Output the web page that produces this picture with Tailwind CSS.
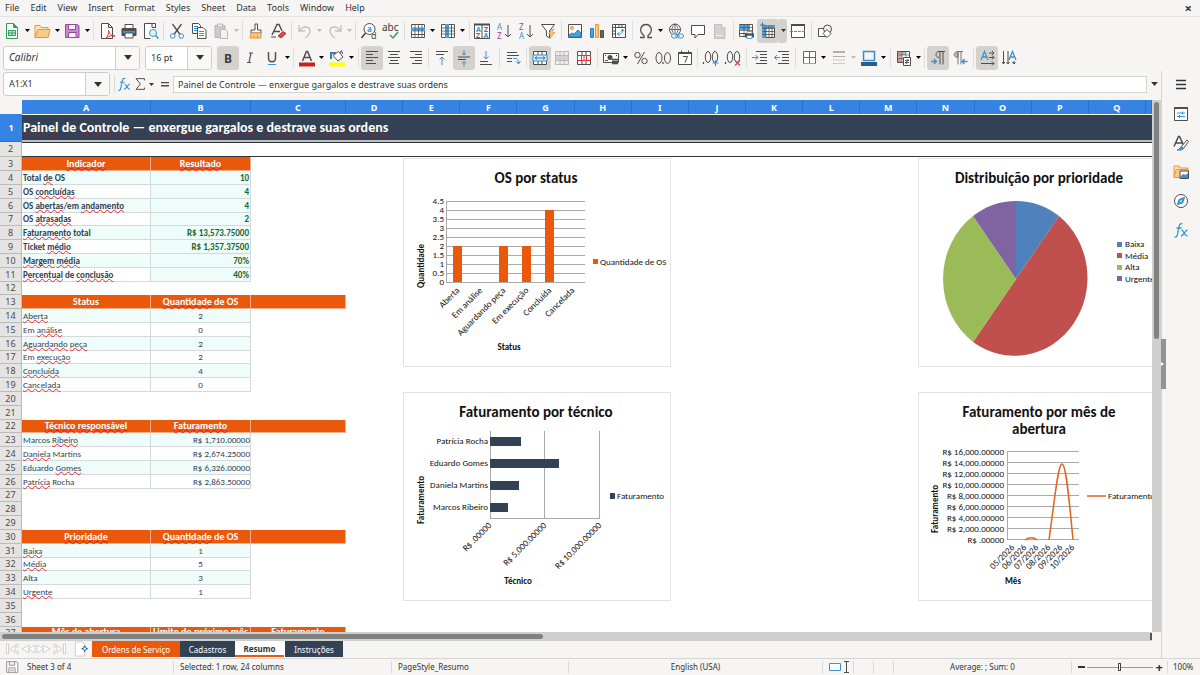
<!DOCTYPE html>
<html lang="en">
<head>
<meta charset="utf-8">
<title>Resumo — Spreadsheet</title>
<script src="https://cdn.jsdelivr.net/npm/@tailwindcss/browser@4"></script>
</head>
<body class="flex h-screen flex-col overflow-hidden bg-[#f6f5f3] font-['Noto_Sans','Open_Sans',sans-serif] text-[9px] text-[#2e3436]">

<!-- Icon symbols, 18×18 grid -->
<svg class="hidden" aria-hidden="true">
  <g fill="none" stroke="#4d4d4d" stroke-width="1">
  <symbol id="new" viewBox="0 0 18 18"><path d="M3.500 1.500h7l4 4v11h-11z" fill="#fff" stroke="#33a05a"/><path d="M10.500 1.500v4h4z" fill="#33a05a" stroke="#33a05a"/><path d="M5.500 8.500h7v5h-7zM5.500 11h7M9 8.500v5" fill="#c4e8cf" stroke="#33a05a"/></symbol>
  <symbol id="open" viewBox="0 0 18 18"><path d="M2 15.500V3.500h5l1.500 2H15v10z" fill="#fde3b8" stroke="#e8963a"/><path d="M2 15.500l3-8h12l-2 8z" fill="#fbcb85" stroke="#e8963a"/></symbol>
  <symbol id="save" viewBox="0 0 18 18"><path d="M2.500 2.500h12l1.500 1.500v11.500h-13.500z" fill="#c98bd0" stroke="#9a45a5"/><path d="M5.500 2.500h7v5h-7zM5.500 10.500h7.500v5H5.500z" fill="#fff" stroke="#9a45a5"/></symbol>
  <symbol id="pdf" viewBox="0 0 18 18"><path d="M3.500 1.500h7l4 4v11h-11z" fill="#fff" stroke="#4d4d4d"/><path d="M10.500 1.500v4h4" fill="none" stroke="#4d4d4d"/><path d="M8 16c2-2 3-5 2.500-7.500C12 13 14 14.500 17 14c-3-1-6 0-9 2z" fill="none" stroke="#d9363e"/></symbol>
  <symbol id="print" viewBox="0 0 18 18"><path d="M5 6V2.500h8V6" fill="#fff" stroke="#4d4d4d"/><rect x="1.500" y="6" width="15" height="8" rx="1" fill="#4d4d4d" stroke="none"/><path d="M3 10h12" stroke="#4a90c8" stroke-width="2"/><path d="M5 11h8v5H5z" fill="#fff" stroke="#4d4d4d"/></symbol>
  <symbol id="preview" viewBox="0 0 18 18"><path d="M13.500 5.500v-4h-11v15h6" fill="#fff" stroke="#4d4d4d"/><path d="M10 1.500v4h4" fill="none" stroke="#4d4d4d"/><circle cx="11" cy="11" r="3.500" fill="#e5f3fc" stroke="#3a93cf"/><path d="M13.500 13.500l3 3" stroke="#3a93cf" stroke-width="1.500"/></symbol>
  <symbol id="cut" viewBox="0 0 18 18"><path d="M4.500 2l7.500 10.500M13.500 2L6 12.500" stroke="#4d4d4d" stroke-width="1.300"/><circle cx="4.800" cy="14" r="2.300" fill="none" stroke="#3a93cf"/><circle cx="13.200" cy="14" r="2.300" fill="none" stroke="#3a93cf"/></symbol>
  <symbol id="copy" viewBox="0 0 18 18"><path d="M2.500 1.500h6l2 2v8h-8z" fill="#fff" stroke="#4d4d4d"/><path d="M4 4.500h4M4 6.500h4M4 8.500h4" stroke="#3a93cf"/><path d="M7.500 5.500h5.500l3 3v8H7.500z" fill="#fff" stroke="#4d4d4d"/><path d="M9 9.500h5M9 11.500h5M9 13.500h5" stroke="#3a93cf"/></symbol>
  <symbol id="paste" viewBox="0 0 18 18"><path d="M3 3.500h10v12H3z" fill="#ccc" stroke="#b5b5b5"/><path d="M5.500 2h5v3h-5z" fill="#eee" stroke="#b5b5b5"/><path d="M8.500 7.500h5l2 2v7h-7z" fill="#f3f3f3" stroke="#b5b5b5"/></symbol>
  <symbol id="brush" viewBox="0 0 18 18"><path d="M8 2h2.500v6H14v3H4V8h4z" fill="#fff" stroke="#4d4d4d"/><path d="M4 11h10v5H3z" fill="#fbcb85" stroke="#e8963a"/><path d="M7 13v3M10.500 13v3" stroke="#e8963a"/></symbol>
  <symbol id="clear" viewBox="0 0 18 18"><path d="M3 13L8 2.500h2L13 9M5 9.500h6" fill="none" stroke="#4d4d4d" stroke-width="1.400"/><path d="M9 14l5-4.500 3 2-5 4.500z" fill="#e2434b" stroke="#c9323a"/><path d="M2 15h5" stroke="#4d4d4d"/></symbol>
  <symbol id="undo" viewBox="0 0 18 18"><path d="M3 3v6h6M3.500 8.500C7 3.500 14 4 14 9c0 3-2 5-5 7" fill="none" stroke="#c0c0c0" stroke-width="1.300"/></symbol>
  <symbol id="redo" viewBox="0 0 18 18"><path d="M15 3v6H9M14.500 8.500C11 3.500 4 4 4 9c0 3 2 5 5 7" fill="none" stroke="#c0c0c0" stroke-width="1.300"/></symbol>
  <symbol id="find" viewBox="0 0 18 18"><circle cx="9.500" cy="7" r="5.500" fill="#fff" stroke="#4d4d4d"/><path d="M5.500 11L1.500 16" stroke="#4d4d4d" stroke-width="1.600"/><text x="7" y="10" font-size="8" font-weight="700" fill="#3a93cf" stroke="none">a</text><text x="11" y="17" font-size="9" fill="#4d4d4d" stroke="none">d</text></symbol>
  <symbol id="abc" viewBox="0 0 18 18"><text x="0" y="9" font-size="10" fill="#3c3c3c" stroke="none">abc</text><path d="M8 13l3 3 5-6" fill="none" stroke="#33a05a" stroke-width="1.500"/></symbol>
  <symbol id="row" viewBox="0 0 18 18"><path d="M2.500 2.500h13v13h-13zM2.500 12.500h13" fill="#fff" stroke="#555"/><path d="M2 5.500h14v4H2z" fill="#4aa3de" stroke="none"/><path d="M6 2.500v13M9.500 2.500v13M13 2.500v13" stroke="#555" stroke-width=".8"/></symbol>
  <symbol id="col" viewBox="0 0 18 18"><path d="M2.500 2.500h13v13h-13zM12.500 2.500v13" fill="#fff" stroke="#555"/><path d="M6 2h4v14H6z" fill="#4aa3de" stroke="none"/><path d="M2.500 6h13M2.500 9h13M2.500 12h13" stroke="#555" stroke-width=".8"/></symbol>
  <symbol id="sort" viewBox="0 0 18 18"><path d="M1.500 2.500h15v14h-15zM9 3v13" fill="#fff" stroke="#4d4d4d"/><path d="M1 2.500h16" stroke="#4d4d4d" stroke-width="2"/><g font-size="7" font-weight="700" stroke="none"><text x="3" y="10" fill="#3a93cf">A</text><text x="3" y="16" fill="#9a45a5">Z</text><text x="11" y="10" fill="#9a45a5">Z</text><text x="10.500" y="16" fill="#3a93cf">A</text></g></symbol>
  <symbol id="az" viewBox="0 0 18 18"><text x="2" y="8" font-size="8" fill="#3a93cf" stroke="none">A</text><text x="2" y="17" font-size="8" fill="#9a45a5" stroke="none">Z</text><path d="M13 3v12M10 12l3 3 3-3" fill="none" stroke="#4d4d4d"/></symbol>
  <symbol id="za" viewBox="0 0 18 18"><text x="2" y="8" font-size="8" fill="#9a45a5" stroke="none">Z</text><text x="2" y="17" font-size="8" fill="#3a93cf" stroke="none">A</text><path d="M13 3v12M10 12l3 3 3-3" fill="none" stroke="#4d4d4d"/></symbol>
  <symbol id="filter" viewBox="0 0 18 18"><path d="M2.500 2.500h13L10.500 9v7l-3-2V9z" fill="#fff" stroke="#4d4d4d"/><path d="M13.500 7l-4 5h2.500l-1 4.500 5-6h-3l2-3.500z" fill="#fbcb85" stroke="#e8963a" stroke-width=".7"/></symbol>
  <symbol id="image" viewBox="0 0 18 18"><path d="M2.500 2.500h13v13h-13z" fill="#fff" stroke="#4d4d4d"/><circle cx="6" cy="6" r="1.500" fill="#fbcb85" stroke="#e8963a"/><path d="M3 15v-2l3-2 2 1 4-4 3 3v4z" fill="#4aa3de" stroke="#2f7fb8"/></symbol>
  <symbol id="chart" viewBox="0 0 18 18"><path d="M2.500 6.500h3v9h-3z" fill="#4aa3de" stroke="#2f7fb8"/><path d="M7.500 2.500h3v13h-3z" fill="#fbcb85" stroke="#e8963a"/><path d="M12.500 8.500h3v7h-3z" fill="#666" stroke="#4d4d4d"/></symbol>
  <symbol id="pivot" viewBox="0 0 18 18"><path d="M2.500 2.500h13v13h-13zM2.500 5.500h13M5.500 2.500v13M9 2.500v3M12 2.500v3M2.500 9h3M2.500 12h3" fill="#fff" stroke="#4d4d4d"/><path d="M8 12c4 0 4.500-1 4.500-4M11 9.500L12.500 7 14 9.500M9.500 10.500L7 12l2.500 1.500" fill="none" stroke="#3a93cf"/></symbol>
  <symbol id="omega" viewBox="0 0 18 18"><path d="M3 15.500h4v-2C1 9 4 2.500 9 2.500s8 6.500 2 11v2h4" fill="none" stroke="#4d4d4d" stroke-width="1.300"/></symbol>
  <symbol id="link" viewBox="0 0 18 18"><circle cx="8" cy="7.500" r="5.500" fill="#fff" stroke="#4d4d4d"/><path d="M2.500 7.500h11M8 2v11M8 2c-4 4-4 7 0 11M8 2c4 4 4 7 0 11" fill="none" stroke="#4d4d4d" stroke-width=".8"/><rect x="4.500" y="12" width="6" height="4" rx="2" fill="#f6f5f3" stroke="#3a93cf"/><rect x="10.500" y="12" width="6" height="4" rx="2" fill="#f6f5f3" stroke="#3a93cf"/><path d="M8 14h5" stroke="#3a93cf"/></symbol>
  <symbol id="comment" viewBox="0 0 18 18"><path d="M2.500 3.500h13v9H9l-3 3.500v-3.500H2.500z" fill="#fff" stroke="#4d4d4d"/></symbol>
  <symbol id="header" viewBox="0 0 18 18"><path d="M3.500 2.500h7l3.500 3.500v10.500H3.500z" fill="#d2d2d2" stroke="#c0c0c0"/><path d="M10.500 2.500V6H14" fill="#eee" stroke="#c0c0c0"/><path d="M5 13.500h7" stroke="#eee"/></symbol>
  <symbol id="area" viewBox="0 0 18 18"><path d="M2.500 2.500h13v12h-13zM2.500 11.500h13" fill="#fff" stroke="#555"/><path d="M2 3h11v5H2z" fill="#4aa3de" stroke="none"/><path d="M2.500 5.500h13M2.500 8.500h13M7 2.500v12M11 2.500v12" stroke="#555" stroke-width=".7"/><path d="M8 11.500h9v4H8z" fill="#4d4d4d" stroke="none"/><path d="M10 9.500h5v2h-5zM10 13.500h5v3h-5z" fill="#fff" stroke="#3a93cf" stroke-width=".8"/></symbol>
  <symbol id="freeze" viewBox="0 0 18 18"><path d="M3.500 3.500h12v12h-12z" fill="#fff" stroke="#4d4d4d"/><path d="M3 3h13v3H7v10H3z" fill="#4aa3de" stroke="none"/><path d="M3.500 6.500h12M3.500 9.500h12M3.500 12.500h12M7 3.500v12M10 3.500v12M13 3.500v12" stroke="#4d4d4d" stroke-width=".8"/><path d="M3.500 .5v5M1 3h5" stroke="#2f7fb8"/></symbol>
  <symbol id="split" viewBox="0 0 18 18"><path d="M2.500 3h13v12.500h-13z" fill="#fff" stroke="#4d4d4d"/><path d="M2 3h14" stroke="#4d4d4d" stroke-width="2"/><path d="M1 9.500h16" stroke="#3a93cf" stroke-dasharray="3 1"/></symbol>
  <symbol id="shapes" viewBox="0 0 18 18"><path d="M2.500 6.500h8v8h-8z" fill="#fff" stroke="#4d4d4d"/><circle cx="11.500" cy="7" r="4" fill="#f6f5f3" stroke="#4d4d4d"/><path d="M11 7.500l4 4-4 4-4-4z" fill="#fff" stroke="#4d4d4d"/></symbol>

  <symbol id="bold" viewBox="0 0 18 18"><text x="5" y="13.500" font-size="12" font-weight="700" fill="#3c3c3c" stroke="none">B</text></symbol>
  <symbol id="italic" viewBox="0 0 18 18"><path d="M8 4h4M6 13.500h4M10 4L8 13.500" stroke="#4d4d4d" stroke-width="1.200"/></symbol>
  <symbol id="under" viewBox="0 0 18 18"><path d="M5.500 3v6c0 5 7 5 7 0V3" fill="none" stroke="#4d4d4d" stroke-width="1.400"/><path d="M5 15.500h8" stroke="#3a93cf"/></symbol>
  <symbol id="fcol" viewBox="0 0 18 18"><path d="M4.500 12L8.400 2.500h1.200L13.500 12M6 8.500h6" fill="none" stroke="#4d4d4d" stroke-width="1.500"/><path d="M1 13.500h16v4H1z" fill="#c9211e" stroke="none"/></symbol>
  <symbol id="hcol" viewBox="0 0 18 18"><path d="M5 6.500l5 5.500 5-4-4.500-5.500z" fill="#fff" stroke="#4d4d4d"/><path d="M3 10V4h5" fill="none" stroke="#2f7fb8" stroke-width="2"/><path d="M12 4l1.500-2.500 1 3.500" fill="none" stroke="#4d4d4d"/><path d="M1 13.500h16v4H1z" fill="#ff0" stroke="none"/></symbol>
  <symbol id="left" viewBox="0 0 18 18"><path d="M3 2.500h12M3 5.500h7M3 8.500h12M3 11.500h7M3 14.500h10" stroke="#4d4d4d"/></symbol>
  <symbol id="center" viewBox="0 0 18 18"><path d="M3 2.500h12M5 5.500h8M3 8.500h12M5 11.500h8M4 14.500h10" stroke="#4d4d4d"/></symbol>
  <symbol id="right" viewBox="0 0 18 18"><path d="M3 2.500h12M8 5.500h7M3 8.500h12M8 11.500h7M5 14.500h10" stroke="#4d4d4d"/></symbol>
  <symbol id="top" viewBox="0 0 18 18"><path d="M3 2.500h12M3 5.500h8" stroke="#4d4d4d"/><path d="M9 16V8M6.500 10.500L9 8l2.500 2.500" fill="none" stroke="#3a93cf"/></symbol>
  <symbol id="middle" viewBox="0 0 18 18"><path d="M3 8h12M3 10.500h8" stroke="#4d4d4d"/><path d="M9 1v5M7 4l2 2 2-2M9 17.500v-5M7 14.500l2-2 2 2" fill="none" stroke="#3a93cf"/></symbol>
  <symbol id="bottom" viewBox="0 0 18 18"><path d="M3 12.500h8M3 15.500h12" stroke="#4d4d4d"/><path d="M9 2v8M6.500 7.500L9 10l2.500-2.500" fill="none" stroke="#3a93cf"/></symbol>
  <symbol id="wrap" viewBox="0 0 18 18"><path d="M3 3.500h10M3 6.500h12M3 9.500h5M3 12.500h5" stroke="#4d4d4d"/><path d="M9 9.500h2c3 0 3 1 3.500 5M12 12.500l2.500 2.500 2-3" fill="none" stroke="#3a93cf"/></symbol>
  <symbol id="merge" viewBox="0 0 18 18"><path d="M2.500 2.500h13v13h-13zM2.500 6.500h13M2.500 11.500h13M7 2.500v4M11 2.500v4M7 11.500v4M11 11.500v4" fill="#fff" stroke="#4d4d4d"/><path d="M2 6h14v6H2z" fill="#d5ecfa" stroke="#3a93cf"/><path d="M4 9h10M6 7.500L4 9l2 1.500M12 7.500L14 9l-2 1.500" fill="none" stroke="#2f7fb8"/></symbol>
  <symbol id="merge2" viewBox="0 0 18 18"><path d="M2.500 2.500h13v13h-13zM2.500 6.500h13M2.500 11.500h13M7 2.500v4M11 2.500v4M7 11.500v4M11 11.500v4" fill="#eee" stroke="#b9b9b9"/><path d="M3 7h12v4H3z" fill="#d0d0d0" stroke="none"/></symbol>
  <symbol id="unmerge" viewBox="0 0 18 18"><path d="M2.500 2.500h13v13h-13zM2.500 6.500h13M2.500 11.500h13M7 2.500v4M11 2.500v4M7 11.500v4M11 11.500v4" fill="#fff" stroke="#4d4d4d"/><path d="M2.500 6.500h13v5h-13zM6.500 6.500v5M9 6.500v5M11.500 6.500v5" fill="#fff" stroke="#d9363e"/></symbol>
  <symbol id="currency" viewBox="0 0 18 18"><path d="M1.500 4.500h15v9h-15z" fill="#fff" stroke="#4d4d4d"/><circle cx="8" cy="8.500" r="2.500" fill="#4d4d4d" stroke="none"/><path d="M3 6.500h1M14 6.500h1M3 11.500h3" stroke="#4d4d4d"/><path d="M10 10.500h6M10 12.500h6M10 14.500h6" stroke="#4d4d4d" stroke-width="1.400"/></symbol>
  <symbol id="percent" viewBox="0 0 18 18"><circle cx="5.500" cy="6" r="2.700" fill="none" stroke="#4d4d4d"/><circle cx="12.500" cy="12" r="2.700" fill="none" stroke="#4d4d4d"/><path d="M12.500 3l-7 12" stroke="#4d4d4d"/></symbol>
  <symbol id="number" viewBox="0 0 18 18"><ellipse cx="5" cy="9" rx="3" ry="5.500" fill="none" stroke="#4d4d4d"/><ellipse cx="13.500" cy="9" rx="3" ry="5.500" fill="none" stroke="#4d4d4d"/><path d="M9 13v2" stroke="#4d4d4d" stroke-width="1.300"/></symbol>
  <symbol id="date" viewBox="0 0 18 18"><path d="M2.500 3.500h13v12h-13z" fill="#fff" stroke="#4d4d4d"/><path d="M2.500 4h13" stroke="#4d4d4d" stroke-width="2"/><path d="M5.500 1.500v3M12.500 1.500v3M7 7.500h4.500l-2.500 6" fill="none" stroke="#4d4d4d"/></symbol>
  <symbol id="decadd" viewBox="0 0 18 18"><path d="M1.500 13v2" stroke="#4d4d4d" stroke-width="1.300"/><ellipse cx="6" cy="8" rx="2.700" ry="5.500" fill="none" stroke="#4d4d4d"/><ellipse cx="13" cy="8" rx="2.700" ry="5.500" fill="none" stroke="#4d4d4d"/><path d="M13.500 11v6M10.500 14h6" stroke="#3a93cf" stroke-width="1.200"/></symbol>
  <symbol id="decdel" viewBox="0 0 18 18"><path d="M1.500 13v2" stroke="#4d4d4d" stroke-width="1.300"/><ellipse cx="6" cy="8" rx="2.700" ry="5.500" fill="none" stroke="#4d4d4d"/><ellipse cx="13" cy="8" rx="2.700" ry="5.500" fill="none" stroke="#4d4d4d"/><path d="M11 11.500l5 5M16 11.500l-5 5" stroke="#e2434b" stroke-width="1.200"/></symbol>
  <symbol id="indent" viewBox="0 0 18 18"><path d="M5 2.500h11M9 5.500h7M9 8.500h7M9 11.500h7M5 14.500h11" stroke="#4d4d4d"/><path d="M1 8.500h5.500M4.500 6l2.500 2.500L4.500 11" fill="none" stroke="#3a93cf"/></symbol>
  <symbol id="outdent" viewBox="0 0 18 18"><path d="M5 2.500h11M9 5.500h7M9 8.500h7M9 11.500h7M5 14.500h11" stroke="#4d4d4d"/><path d="M1.500 8.500H7M4 6L1.500 8.500 4 11" fill="none" stroke="#3a93cf"/></symbol>
  <symbol id="borders" viewBox="0 0 18 18"><path d="M3.500 2.500h12v12h-12zM9.500 2.500v12M3.500 8.500h12" fill="#fff" stroke="#666"/><path d="M3 14.500h13" stroke="#e8963a"/></symbol>
  <symbol id="lines" viewBox="0 0 18 18"><path d="M3 3h12" stroke="#b0b0b0" stroke-width="2"/><path d="M3 7.500h12" stroke="#b0b0b0"/><path d="M3 11h12M3 14.500h12" stroke="#b0b0b0" stroke-dasharray="1.500 1"/></symbol>
  <symbol id="bcol" viewBox="0 0 18 18"><path d="M3.500 2.500h11v9h-11z" fill="#eef6fc" stroke="#4a86b8" stroke-width="1.500"/><path d="M1 13h16v4H1z" fill="#1f6094" stroke="none"/></symbol>
  <symbol id="cond" viewBox="0 0 18 18"><path d="M2.500 2.500h12v11h-12z" fill="#fff" stroke="#4d4d4d"/><path d="M3 3h4v3H3zM3 9h4v4H3z" fill="#f08a8f" stroke="none"/><path d="M7 3h4v3H7zM3 6h4v3H3z" fill="#8ed3a3" stroke="none"/><path d="M2.500 6h12M2.500 9.500h12M7 2.500v11M11 2.500v11" stroke="#4d4d4d" stroke-width=".6"/><path d="M8.500 8.500h7v8h-7z" fill="#fff" stroke="#4d4d4d"/><path d="M10 11.500h4M10 13.500h4M13 10l-2 5" stroke="#4d4d4d"/></symbol>
  <symbol id="ltr" viewBox="0 0 18 18"><path d="M16 2.500h-6c-4 0-4 6 0 6M11 2.500v13M14 2.500v13" fill="none" stroke="#4d4d4d"/><path d="M2 12.500h5M5 10l2.500 2.500L5 15" fill="none" stroke="#3a93cf" stroke-width="1.300"/></symbol>
  <symbol id="rtl" viewBox="0 0 18 18"><path d="M12 2.500H7c-5 0-5 6 0 6V2.500M7 2.500v13M10 2.500v13" fill="#bbb" stroke="#777"/><path d="M16.500 12.500h-5M13.500 10L11 12.500l2.500 2.500" fill="none" stroke="#3a93cf" stroke-width="1.300"/></symbol>
  <symbol id="horiz" viewBox="0 0 18 18"><path d="M3 11L6.500 2.500 10 11M4 8h5" fill="none" stroke="#3a93cf" stroke-width="1.300"/><path d="M11 4h5M11 8.500h5M3 14.500h13M14 2l2 2-2 2M14 6.500l2 2-2 2M14 12.500l2 2-2 2" fill="none" stroke="#4d4d4d"/></symbol>
  <symbol id="vert" viewBox="0 0 18 18"><path d="M9 11l3.500-8.500L16 11M10 8h5" fill="none" stroke="#3a93cf" stroke-width="1.300"/><path d="M3.500 2v13M8 2v13M14 12v3M2 13l1.500 2L5 13M6.500 13L8 15l1.500-2M12.500 13l1.500 2 1.500-2" fill="none" stroke="#4d4d4d"/></symbol>

  <symbol id="menu" viewBox="0 0 18 18"><path d="M4 4.500h10M4 8.500h10M4 12.500h10" stroke="#2e3436" stroke-width="1.600"/></symbol>
  <symbol id="props" viewBox="0 0 18 18"><path d="M2.500 3h13v12.500h-13z" fill="#fff" stroke="#4d4d4d"/><path d="M2 3h14" stroke="#4d4d4d" stroke-width="2"/><path d="M5 8h8M5 11.500h8M10.500 6.500v3M7.500 10v3" stroke="#3a93cf"/></symbol>
  <symbol id="styles" viewBox="0 0 18 18"><path d="M2 12.500L6.500 2.500h1L12 12M4 9h7" fill="none" stroke="#4d4d4d" stroke-width="1.500"/><path d="M9 13l6-7 1.500 1.500-5 7z" fill="#fff" stroke="#4d4d4d"/><path d="M5 16c3 0 2-3 5-3 2 1 1 3-1 3z" fill="#4aa3de" stroke="#2f7fb8"/></symbol>
  <symbol id="gallery" viewBox="0 0 18 18"><path d="M2 14.500V3h5l1 2h8v4" fill="#fde3b8" stroke="#e8963a"/><path d="M2 14.500l2-8h12v8z" fill="#fbcb85" stroke="#e8963a"/><path d="M8 8h8.500v7.500H8z" fill="#fff" stroke="#4d4d4d"/><path d="M8.500 15v-2l3-2 2 1 2.500-2v5z" fill="#3a93cf" stroke="none"/></symbol>
  <symbol id="navigator" viewBox="0 0 18 18"><circle cx="9" cy="9" r="6.500" fill="#fff" stroke="#4d4d4d"/><path d="M12.500 5.500L10.500 11 5.500 12.500 7 7.500z" fill="#4aa3de" stroke="#2f7fb8"/><path d="M8 9.500l2-1" stroke="#fff"/></symbol>
  <symbol id="fx" viewBox="0 0 18 18"><path d="M10.500 3c-2-1-3 0-3.500 3L5.500 13c-.5 3-1.500 3.500-3 3M4.500 7h5" fill="none" stroke="#3a93cf" stroke-width="1.300"/><path d="M9.500 9c2 0 3 6 6 6M15.500 9c-2 0-4 6-6.500 6" fill="none" stroke="#3a93cf" stroke-width="1.300"/></symbol>
  <symbol id="sigma" viewBox="0 0 18 18"><path d="M14 5V3H4.500l5 6-5 6H14v-2" fill="none" stroke="#4d4d4d" stroke-width="1.100"/></symbol>
  <symbol id="equals" viewBox="0 0 18 18"><path d="M4.500 7.500h9M4.500 11h9" stroke="#4d4d4d" stroke-width="1.500"/></symbol>
  <symbol id="disk" viewBox="0 0 18 18"><path d="M3 3h11l1.500 1.500V15H3zM6 3v4h6V3M5.500 15v-5h7v5M7 12.500h4" fill="#fff" stroke="#888"/></symbol>
  <symbol id="addsheet" viewBox="0 0 18 18"><path d="M1.500 1h8l2.500 3v13H1.500z" fill="#fff" stroke="#ccc"/><circle cx="12" cy="8.500" r="2" fill="#fff" stroke="#2a5a9c"/><path d="M12 5v2M12 10v2M8.500 8.500h2M13.500 8.500h2" stroke="#2a5a9c" stroke-width="1.300"/></symbol>
  <symbol id="arrow" viewBox="0 0 10 6"><path d="M0 0h10L5 6z" fill="currentColor" stroke="none"/></symbol>
  </g>
</svg>

<nav class="flex h-[17px] shrink-0 items-center border-b border-[#e6e4e1] pr-2 pl-[5px]" aria-label="Main menu">
  <div id="menubar" class="flex items-center gap-[11px]"></div>
  <button class="ml-auto text-[13px] leading-none font-bold" aria-label="Close document">×</button>
</nav>

<div id="standard" role="toolbar" aria-label="Standard" class="flex h-[27px] w-[836px] shrink-0 items-center pl-px"></div>

<div class="flex h-[27px] shrink-0 items-center pl-[3px]" role="toolbar" aria-label="Formatting">
  <div class="flex h-6 w-[137px] shrink-0 overflow-hidden rounded-[3px] border border-[#d0cdc9] bg-white">
    <input class="w-0 flex-1 px-[5px] text-[10px] italic outline-none" aria-label="Font name" value="Calibri">
    <button class="flex w-6 items-center justify-center border-l border-[#d0cdc9] bg-[#f8f7f6]" aria-label="Font list"><svg class="h-[5px] w-2"><use href="#arrow"/></svg></button>
  </div>
  <div class="ml-[5px] flex h-6 w-[67px] shrink-0 overflow-hidden rounded-[3px] border border-[#d0cdc9] bg-white">
    <input class="w-0 flex-1 pl-[5px] outline-none" aria-label="Font size" value="16 pt">
    <button class="flex w-6 items-center justify-center border-l border-[#d0cdc9] bg-[#f8f7f6]" aria-label="Size list"><svg class="h-[5px] w-2"><use href="#arrow"/></svg></button>
  </div>
  <div id="formatting" class="ml-[5px] flex w-[803px] shrink-0 items-center"></div>
</div>

<div class="flex min-h-0 flex-1">
  <main class="flex min-w-0 flex-1 flex-col">
    <div class="flex h-[29px] shrink-0 items-start pl-[3px]">
      <div class="mt-px flex h-6 w-[107px] shrink-0 overflow-hidden rounded-[3px] border border-[#d0cdc9] bg-white">
        <input class="w-0 flex-1 px-[5px] outline-none" aria-label="Name box" value="A1:X1">
        <button class="flex w-6 items-center justify-center border-l border-[#d0cdc9] bg-[#f8f7f6]" aria-label="Ranges"><svg class="h-[5px] w-2"><use href="#arrow"/></svg></button>
      </div>
      <div class="mt-1 ml-1 h-[18px] w-px bg-[#dcdad7]"></div>
      <button class="mt-[5px] ml-px" aria-label="Function wizard"><svg class="size-4"><use href="#fx"/></svg></button>
      <button class="mt-[5px] flex items-center" aria-label="Select function"><svg class="size-4"><use href="#sigma"/></svg><svg class="ml-px h-[3px] w-[5px]"><use href="#arrow"/></svg></button>
      <button class="mt-[5px] ml-[3px]" aria-label="Formula"><svg class="size-4"><use href="#equals"/></svg></button>
      <input class="mt-[5px] h-[17px] min-w-0 flex-1 border border-[#d6d4d1] bg-white px-1 outline-none" aria-label="Formula input" value="Painel de Controle — enxergue gargalos e destrave suas ordens">
      <button class="mt-[5px] flex h-4 w-[14px] items-center justify-center" aria-label="Expand formula bar"><svg class="h-1 w-[7px]"><use href="#arrow"/></svg></button>
    </div>

    <div class="flex min-h-0 flex-1">
      <div class="relative min-w-0 flex-1 overflow-hidden bg-white">
        <table class="w-full table-fixed border-separate border-spacing-0 font-[Carlito,Lato,sans-serif] text-[9px] leading-[12px] text-[#334155]">
          <colgroup id="cols"></colgroup>
          <thead><tr id="letters" class="h-[14px]"></tr></thead>
          <tbody id="rows"></tbody>
        </table>

        <!-- Charts float over the cells -->
        <figure class="absolute top-[58px] left-[403px] h-[209px] w-[268px] border border-[#e3e3e3] bg-white">
          <svg id="chart-status" viewBox="404 159 266 207" class="size-full font-[Carlito,Lato,sans-serif] text-[9px]" fill="#111" role="img" aria-label="OS por status"></svg>
        </figure>
        <figure class="absolute top-[292px] left-[403px] h-[209px] w-[268px] border border-[#e3e3e3] bg-white">
          <svg id="chart-tech" viewBox="404 393 266 207" class="size-full font-[Carlito,Lato,sans-serif] text-[9px]" fill="#111" role="img" aria-label="Faturamento por técnico"></svg>
        </figure>
        <figure class="absolute top-[58px] left-[918px] h-[209px] w-[268px] border border-[#e3e3e3] bg-white">
          <svg viewBox="919 159 266 207" class="size-full font-[Carlito,Lato,sans-serif] text-[9px]" fill="#111" role="img" aria-label="Distribuição por prioridade">
            <text x="1039" y="183" text-anchor="middle" class="text-[15px] font-bold">Distribuição por prioridade</text>
            <path d="M1016 279V201A73 78 0 0 1 1059 216Z" fill="#4f81bd"/>
            <path d="M1016 279L1059 216A73 78 0 0 1 973 342Z" fill="#c0504d"/>
            <path d="M1016 279L973 342A73 78 0 0 1 973 216Z" fill="#9bbb59"/>
            <path d="M1016 279L973 216A73 78 0 0 1 1016 201Z" fill="#8064a2"/>
            <path d="M1117 242h5v5h-5z" fill="#4f81bd"/><text x="1125" y="247">Baixa</text>
            <path d="M1117 253h5v5h-5z" fill="#c0504d"/><text x="1125" y="259">Média</text>
            <path d="M1117 265h5v5h-5z" fill="#9bbb59"/><text x="1125" y="270">Alta</text>
            <path d="M1117 276h5v5h-5z" fill="#8064a2"/><text x="1125" y="282">Urgente</text>
          </svg>
        </figure>
        <figure class="absolute top-[292px] left-[918px] h-[209px] w-[268px] border border-[#e3e3e3] bg-white">
          <svg id="chart-month" viewBox="919 393 266 207" class="size-full font-[Carlito,Lato,sans-serif] text-[9px]" fill="#111" role="img" aria-label="Faturamento por mês de abertura"></svg>
        </figure>
      </div>
      <div class="w-[9px] shrink-0 bg-[#cfcfcf] px-[2px] pt-[2px]"><div class="h-[237px] rounded-full bg-[#808281]"></div></div>
    </div>
    <div class="mr-[9px] flex h-[9px] shrink-0 items-center bg-[#cfcfcf] pl-[2px]"><div class="h-[5px] w-[47%] rounded-full bg-[#808281]"></div><div class="ml-auto h-[7px] w-[2px] bg-[#555]"></div></div>

    <div class="flex h-[17px] shrink-0 items-start">
      <svg class="ml-[5px] h-4 w-[62px]" viewBox="0 0 62 16" fill="#fff" stroke="#cfcfcf" stroke-width="1"><path d="M1.500 3v10h2V3zM13 3L5 8l8 5v-3H10V6h3zM24 4l-7 4 7 4zM30 4l-7 4 7 4zM32 4l7 4-7 4zM38 4l7 4-7 4zM49 3l8 5-8 5v-3h3V6h-3zM58.500 3v10h2V3z"/></svg>
      <button class="mr-[2px] ml-[7px] h-4 w-4" aria-label="Add sheet"><svg class="size-4"><use href="#addsheet"/></svg></button>
      <div class="flex h-4 text-[8px] leading-[15px]" role="tablist">
        <button role="tab" class="w-[88px] bg-[#ea580c] text-white">Ordens de Serviço</button>
        <button role="tab" class="w-[55px] bg-[#334155] text-white">Cadastros</button>
        <button role="tab" aria-selected="true" class="w-[49px] border-b-2 border-[#ea580c] bg-white font-bold">Resumo</button>
        <button role="tab" class="w-[59px] border-l border-white bg-[#334155] text-white">Instruções</button>
      </div>
    </div>
  </main>

  <aside class="relative flex w-[39px] shrink-0 flex-col items-center gap-[11px] border-l border-[#d6d4d1] pt-[5px]" aria-label="Sidebar">
    <button aria-label="Sidebar settings"><svg class="size-[18px]"><use href="#menu"/></svg></button>
    <button aria-label="Properties"><svg class="size-[18px]"><use href="#props"/></svg></button>
    <button aria-label="Styles"><svg class="size-[18px]"><use href="#styles"/></svg></button>
    <button aria-label="Gallery"><svg class="size-[18px]"><use href="#gallery"/></svg></button>
    <button aria-label="Navigator"><svg class="size-[18px]"><use href="#navigator"/></svg></button>
    <button aria-label="Functions"><svg class="size-[18px]"><use href="#fx"/></svg></button>
    <button class="absolute top-[268px] left-[-1px] flex h-[50px] w-[5px] items-center bg-[#929392]" aria-label="Hide sidebar"><svg class="h-1 w-1" viewBox="0 0 4 4" fill="#fff"><path d="M0 0l3 2-3 2z"/></svg></button>
  </aside>
</div>

<footer class="flex h-[17px] shrink-0 items-center border-t border-[#d6d4d1] text-[8px] leading-[12px]">
  <div class="flex w-[27px] pl-1"><svg class="size-4"><use href="#disk"/></svg></div>
  <div class="w-[146px]">Sheet 3 of 4</div>
  <div class="w-[218px] border-l border-[#dcdad7] pl-[6px]">Selected: 1 row, 24 columns</div>
  <div class="w-[177px] border-l border-[#dcdad7] pl-[6px]">PageStyle_Resumo</div>
  <div class="flex-1 border-l border-[#dcdad7] text-center">English (USA)</div>
  <div class="flex h-3 w-[31px] items-center border-l border-[#dcdad7] pl-[6px]"><svg class="h-3 w-5" viewBox="0 0 20 12" fill="none"><path d="M.5 2.500h11v7H.5z" fill="#fff" stroke="#3a93cf"/><path d="M17.500 1v10M15 .5h5M15 11.500h5" stroke="#4d4d4d"/></svg></div>
  <div class="h-3 w-5 border-l border-[#dcdad7]"></div>
  <div class="h-3 w-5 border-l border-[#dcdad7]"></div>
  <div class="w-[178px] border-l border-[#dcdad7] text-center">Average: ; Sum: 0</div>
  <div class="flex h-3 w-24 items-center justify-between border-l border-[#dcdad7] pr-1 pl-[6px]">
    <button class="h-[2px] w-[7px] bg-[#2e3436]" aria-label="Zoom out"></button>
    <input type="range" aria-label="Zoom" min="0" max="100" value="49" class="h-3 w-[66px] appearance-none bg-[linear-gradient(#999,#999)] bg-[length:100%_1px] bg-center bg-no-repeat [&::-webkit-slider-thumb]:h-2 [&::-webkit-slider-thumb]:w-[3px] [&::-webkit-slider-thumb]:appearance-none [&::-webkit-slider-thumb]:border [&::-webkit-slider-thumb]:border-[#444] [&::-webkit-slider-thumb]:bg-white">
    <button class="text-[13px] leading-none font-bold" aria-label="Zoom in">+</button>
  </div>
  <div class="w-[33px] border-l border-[#dcdad7] pl-[5px]">100%</div>
</footer>

<script>
const $ = id => document.getElementById(id);

$('menubar').innerHTML = 'File Edit View Insert Format Styles Sheet Data Tools Window Help'.split(' ')
  .map(t => `<button class="leading-[12px]">${t}</button>`).join('');

// Toolbar notation: "|" separator, "name" button, "*name" pressed, "name>" with drop-down, "-name>" disabled drop-down
const toolbar = (id, items) => {
  $(id).innerHTML = items.split(' ').map(item => {
    if (item === '|') return '<span class="flex w-[5px] justify-center"><span class="h-5 w-px bg-[#e0deda]"></span></span>';
    const name = item.replace(/[*>-]/g, '');
    const pressed = item[0] === '*';
    const icon = `<svg class="size-[18px]"><use href="#${name}"/></svg>`;
    const drop = item.includes('>');
    const button = `<button aria-label="${name}" class="${pressed ? 'flex h-6 w-[22px] shrink-0 items-center justify-center rounded-[3px] bg-[#d5d2ce]' : 'flex h-6 w-[22px] shrink-0 items-center justify-center'}">${icon}</button>`;
    const arrow = `<button aria-label="${name} options" class="${pressed ? 'flex h-6 w-2 shrink-0 items-center justify-center rounded-r-[3px] bg-[#d5d2ce]' : item[0] === '-' ? 'flex h-6 w-2 shrink-0 items-center justify-center text-[#bbb]' : 'flex h-6 w-2 shrink-0 items-center justify-center text-black'}"><svg class="h-[3px] w-[5px]"><use href="#arrow"/></svg></button>`;
    return button + (drop ? arrow : '');
  }).join('');
};
toolbar('standard', 'new> open> save> | pdf print preview | cut copy -paste> | brush clear | -undo> -redo> | find abc | row> col> | sort az za filter | image chart pivot | omega> link comment header | area *freeze> split | shapes');
toolbar('formatting', '*bold italic under> | fcol> hcol> | *left center right | top *middle bottom | wrap | *merge merge2 unmerge | currency> percent number date | decadd decdel | indent outdent | borders> -lines> bcol> | cond> | *ltr rtl | *horiz vert');

// Column widths: row header, A, B, C, then D–Q share the rest, R is cut off
$('cols').innerHTML = '<col class="w-[22px]"><col class="w-[129px]"><col class="w-[100px]"><col class="w-[95px]">' + '<col>'.repeat(14) + '<col class="w-[6px]">';
$('letters').innerHTML = '<th class="bg-[#f6f5f3]"></th>' + [...'ABCDEFGHIJKLMNOPQ', ''].map(c =>
  `<th class="border-r border-[#2a6fc9] bg-[#3584e4] p-0 font-['Noto_Sans'] leading-[13px] font-bold text-white">${c}</th>`).join('');

// Words in [brackets] carry the spell-check squiggle
const spell = t => t.replace(/\[(.+?)\]/g, '<span class="underline decoration-red-600/80 decoration-wavy decoration-1 underline-offset-0 [text-decoration-skip-ink:none]">$1</span>');

const data = {
  3: ['h', '[Indicador]', '[Resultado]'],
  4: ['k', 'Total [de] OS', '10'], 5: ['k', 'OS [concluídas]', '4'], 6: ['k', 'OS [abertas]/em [andamento]', '4'],
  7: ['k', 'OS [atrasadas]', '2'], 8: ['k', '[Faturamento] total', 'R$ 13,573.75000'], 9: ['k', 'Ticket [médio]', 'R$ 1,357.37500'],
  10: ['k', '[Margem] [média]', '70%'], 11: ['k', '[Percentual] de [conclusão]', '40%'],
  13: ['h', 'Status', '[Quantidade] de OS', ''],
  14: ['c', '[Aberta]', '2'], 15: ['c', 'Em [análise]', '0'], 16: ['c', '[Aguardando] [peça]', '2'],
  17: ['c', 'Em [execução]', '2'], 18: ['c', '[Concluída]', '4'], 19: ['c', '[Cancelada]', '0'],
  22: ['h', '[Técnico] [responsável]', '[Faturamento]', ''],
  23: ['r', 'Marcos [Ribeiro]', 'R$ 1,710.00000'], 24: ['r', '[Daniela] Martins', 'R$ 2,674.25000'],
  25: ['r', 'Eduardo [Gomes]', 'R$ 6,326.00000'], 26: ['r', '[Patrícia] Rocha', 'R$ 2,863.50000'],
  30: ['h', '[Prioridade]', '[Quantidade] de OS', ''],
  31: ['c', '[Baixa]', '1'], 32: ['c', '[Média]', '5'], 33: ['c', 'Alta', '3'], 34: ['c', '[Urgente]', '1'],
  37: ['h', '[Mês] de [abertura]', '[Limite] do [próximo] [mês]', '[Faturamento]'],
};
const tints = new Set([4, 6, 8, 10, 14, 16, 18, 23, 25, 31, 33]);
let html = `<tr class="h-7">
  <th class="border-b border-[#2a6fc9] bg-[#3584e4] p-0 font-['Noto_Sans'] font-bold text-white">1</th>
  <td colspan="18" class="border-t border-b-2 border-t-white border-b-[#b9bcc0] bg-[#334155] p-0 pl-px text-[14px] leading-[20px] font-bold whitespace-nowrap text-white">${spell('[Painel] de [Controle] — [enxergue] [gargalos] e [destrave] [suas] [ordens]')}</td></tr>
<tr class="h-[15px]">
  <th class="border-r border-b border-[#bdbbb8] bg-[#e6e4e2] p-0 font-['Noto_Sans'] font-normal text-[#4a4a4a]">2</th>
  <td colspan="18" class="border-t border-b border-[#333] p-0"></td></tr>`;
for (let n = 3; n <= 37; n++) {
  const row = data[n];
  html += `<tr class="${n % 5 === 2 ? 'h-[13px]' : 'h-[14px]'}"><th class="border-r border-b border-[#bdbbb8] bg-[#e6e4e2] p-0 font-['Noto_Sans'] font-normal text-[#4a4a4a]">${n}</th>`;
  if (!row) html += '<td colspan="18" class="p-0"></td>';
  else if (row[0] === 'h') {
    const cls = n === 37
      ? 'border-r border-[#f2b08c] bg-[#ea580c] p-0 align-top text-[10px] leading-[9px] font-bold whitespace-nowrap text-white'
      : 'border-r border-b border-[#f2b08c] bg-[#ea580c] p-0 text-[10px] font-bold whitespace-nowrap text-white';
    html += row.slice(1).map(t => `<th class="${cls}">${spell(t)}</th>`).join('');
    html += `<td colspan="${19 - row.length}" class="p-0"></td>`;
  } else {
    const tint = tints.has(n);
    html += `<td class="${tint ? 'border-r border-b border-[#d5d9dc] bg-[#effdfa] p-0 pl-px' : 'border-r border-b border-[#d5d9dc] p-0 pl-px'}"><span class="${row[0] === 'k' ? 'font-bold' : ''}">${spell(row[1])}</span></td>`;
    const align = { k: 'border-r border-b border-[#d5d9dc] bg-[#effdfa] p-0 pr-px text-right font-bold text-[#166534]',
      c: tint ? 'border-r border-b border-[#d5d9dc] bg-[#effdfa] p-0 text-center' : 'border-r border-b border-[#d5d9dc] p-0 text-center',
      r: tint ? 'border-r border-b border-[#d5d9dc] bg-[#effdfa] p-0 text-right' : 'border-r border-b border-[#d5d9dc] p-0 text-right' }[row[0]];
    html += `<td class="${align}">${row[2]}</td><td colspan="16" class="p-0"></td>`;
  }
  html += '</tr>';
}
$('rows').innerHTML = html;

// Chart helpers
const text = (x, y, t, anchor = 'start', cls = '') => `<text x="${x}" y="${y}" text-anchor="${anchor}" class="${cls}">${t}</text>`;
const turned = (x, y, t, deg, anchor, cls = '') => `<text transform="translate(${x} ${y}) rotate(${deg})" text-anchor="${anchor}" class="${cls}">${t}</text>`;
const line = d => `<path d="${d}" fill="none" stroke="#aaa"/>`;

let s = text(536, 183, 'OS por status', 'middle', 'text-[15px] font-bold');
for (let i = 0; i < 10; i++) {
  const y = 282 - 9 * i;
  s += line(`M446 ${y + .5}h139`) + text(444, y + 3, i / 2, 'end');
}
s += line('M446.5 201v82');
['Aberta', 'Em análise', 'Aguardando peça', 'Em execução', 'Concluída', 'Cancelada'].forEach((t, i) => {
  const x = 457 + 23 * i, v = [2, 0, 2, 2, 4, 0][i];
  s += `<rect x="${x - 4}" y="${282 - 18 * v}" width="9" height="${18 * v}" fill="#ea580c"/>` + turned(x + 3, 291, t, -45, 'end');
});
s += turned(424, 266, 'Quantidade', -90, 'middle', 'font-bold') + text(509, 350, 'Status', 'middle', 'font-bold')
  + '<rect x="593" y="259" width="5" height="5" fill="#ea580c"/>' + text(600, 265, 'Quantidade de OS');
$('chart-status').innerHTML = s;

s = text(536, 417, 'Faturamento por técnico', 'middle', 'text-[15px] font-bold')
  + line('M490.5 431v88M544.5 431v88M599.5 431v88M490 518.5h110');
[['Patrícia Rocha', 31], ['Eduardo Gomes', 69], ['Daniela Martins', 29], ['Marcos Ribeiro', 18]].forEach(([t, w], i) => {
  s += text(488, 444 + 22 * i, t, 'end') + `<rect x="490" y="${437 + 22 * i}" width="${w}" height="9" fill="#334155"/>`;
});
['R$ .00000', 'R$ 5,000.00000', 'R$ 10,000.00000'].forEach((t, i) => s += turned(492 + 55 * i, 526, t, -45, 'end'));
s += turned(424, 500, 'Faturamento', -90, 'middle', 'font-bold') + text(518, 584, 'Técnico', 'middle', 'font-bold')
  + '<rect x="610" y="493" width="5" height="6" fill="#334155"/>' + text(617, 499, 'Faturamento');
$('chart-tech').innerHTML = s;

s = text(1039, 417, 'Faturamento por mês de', 'middle', 'text-[15px] font-bold') + text(1039, 434, 'abertura', 'middle', 'text-[15px] font-bold');
for (let i = 0; i < 9; i++) {
  const y = 540 - 11 * i;
  s += line(`M1007 ${y - .5}h72`) + text(1004, y + 3, i ? `R$ ${2 * i},000.00000` : 'R$ .00000', 'end');
}
s += line('M1007.5 451v89');
['05', '06', '07', '08', '09', '10'].forEach((m, i) => s += turned(1015 + 12 * i, 548, m + '/2026', -45, 'end'));
s += '<path d="M1025 540C1029 537 1034 537 1037 540M1049 540C1055 497 1058 464 1062 464C1066 464 1069 497 1073 540M1087 496h19" fill="none" stroke="#e2651f" stroke-width="1.500"/>'
  + turned(938, 509, 'Faturamento', -90, 'middle', 'font-bold') + text(1013, 584, 'Mês', 'middle', 'font-bold') + text(1108, 499, 'Faturamento');
$('chart-month').innerHTML = s;
</script>
</body>
</html>
